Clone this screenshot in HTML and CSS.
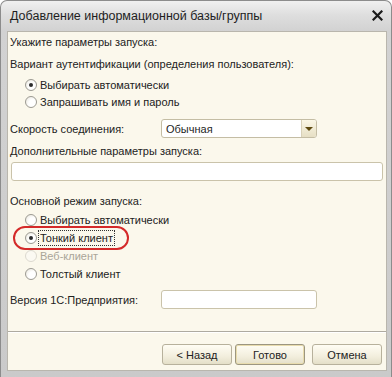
FILE: index.html
```html
<!DOCTYPE html>
<html lang="ru">
<head>
<meta charset="utf-8">
<title>Добавление информационной базы/группы</title>
<link rel="stylesheet" href="styles.css">
</head>
<body>
<div class="window">
  <div class="titlebar">
    <span class="title">Добавление информационной базы/группы</span>
    <svg class="close" width="11" height="11" viewBox="0 0 11 11"><path d="M1.5 1.5 L9.5 9.5 M9.5 1.5 L1.5 9.5" stroke="#1a1a1a" stroke-width="2.2" stroke-linecap="square"/></svg>
  </div>
  <div class="content">
    <div class="form">
      <div class="label l1">Укажите параметры запуска:</div>
      <div class="label l2">Вариант аутентификации (определения пользователя):</div>
      <div class="radios r1">
        <div class="radio checked"><span class="dot"></span><span>Выбирать автоматически</span></div>
        <div class="radio"><span class="dot"></span><span>Запрашивать имя и пароль</span></div>
      </div>
      <div class="row speed">
        <span class="label">Скорость соединения:</span>
        <div class="select"><span class="value">Обычная</span><span class="drop"><span class="tri"></span></span></div>
      </div>
      <div class="label l3">Дополнительные параметры запуска:</div>
      <div class="input wide"></div>
      <div class="label l4">Основной режим запуска:</div>
      <div class="radios r2">
        <div class="radio"><span class="dot"></span><span>Выбирать автоматически</span></div>
        <div class="radio checked marked"><span class="dot"></span><span class="focus">Тонкий клиент</span><span class="ring"></span></div>
        <div class="radio disabled"><span class="dot"></span><span>Веб-клиент</span></div>
        <div class="radio"><span class="dot"></span><span>Толстый клиент</span></div>
      </div>
      <div class="row version">
        <span class="label">Версия 1С:Предприятия:</span>
        <div class="input short"></div>
      </div>
    </div>
    <div class="separator"></div>
    <div class="buttons">
      <button class="btn">&lt; Назад</button>
      <button class="btn default">Готово</button>
      <button class="btn">Отмена</button>
    </div>
  </div>
</div>
</body>
</html>
```

FILE: styles.css
```css
* { box-sizing: border-box; }
html, body { margin: 0; padding: 0; background: #ffffff; }
body {
  font-family: "Liberation Sans", Arial, sans-serif;
  font-size: 11px;
  color: #222222;
}
.window {
  width: 392px;
  height: 377px;
  border: 1px solid #8c8c8c;
  border-bottom: none;
  border-radius: 7px 7px 0 0;
  background: linear-gradient(#f0f0f0 0px, #dedede 14px, #d2d2d2 30px, #cacaca 100%);
  display: flex;
  flex-direction: column;
  overflow: hidden;
}
.titlebar {
  height: 30px;
  flex: none;
  display: flex;
  align-items: center;
  justify-content: space-between;
  padding: 0 8px 1px 9px;
}
.title {
  font-size: 12.5px;
  color: #1e1e1e;
}
.close { display: block; }
.content {
  flex: 1;
  margin: 0 4px 6px 6px;
  background: #fbf8ec;
  border: 1px solid #b9b6ad;
  display: flex;
  flex-direction: column;
}
.form {
  padding: 3px 0 0 2px;
  display: flex;
  flex-direction: column;
  align-items: flex-start;
}
.label { line-height: 14px; white-space: nowrap; }
.l2 { margin-top: 8px; }
.r1 { margin-top: 7px; }
.radios { display: flex; flex-direction: column; gap: 3px; }
.r2 { margin-top: 5px; gap: 4px; }
.radio {
  position: relative;
  display: flex;
  align-items: center;
  height: 14px;
  padding-left: 15px;
  gap: 3px;
  white-space: nowrap;
}
.dot {
  width: 12px;
  height: 12px;
  border-radius: 50%;
  border: 1px solid #9c9a92;
  background: radial-gradient(circle at 65% 65%, #ffffff 40%, #e6e3d8 100%);
  display: flex;
  align-items: center;
  justify-content: center;
  flex: none;
}
.checked .dot::after {
  content: "";
  width: 4px;
  height: 4px;
  border-radius: 50%;
  background: #2c2c2c;
}
.disabled { color: #aaa598; }
.disabled .dot { border-color: #dcd9cf; background: #fbf9f2; }
.focus {
  outline: 1px dotted #333333;
  outline-offset: 0;
  padding: 1px 1px;
  margin-left: -1px;
}
.ring {
  position: absolute;
  left: 3px;
  top: -5px;
  width: 116px;
  height: 24px;
  border: 2px solid #d42a2a;
  border-radius: 12px;
  pointer-events: none;
}
.row {
  display: grid;
  grid-template-columns: 151px auto;
  align-items: center;
  width: 100%;
}
.speed { margin-top: 10px; }
.select {
  width: 156px;
  height: 19px;
  border: 1px solid #c4bda4;
  border-radius: 3px;
  background: #ffffff;
  display: flex;
  align-items: center;
  justify-content: space-between;
  overflow: hidden;
}
.value { padding-left: 4px; color: #1e1e1e; }
.drop {
  width: 15px;
  height: 100%;
  border-left: 1px solid #d8d1b8;
  background: linear-gradient(#fbf7e6, #e6dfc4);
  display: flex;
  align-items: center;
  justify-content: center;
}
.tri {
  width: 0;
  height: 0;
  border-left: 4px solid transparent;
  border-right: 4px solid transparent;
  border-top: 4px solid #5e4a10;
  margin-top: 1px;
}
.l3 { margin-top: 6px; }
.input {
  height: 19px;
  background: #ffffff;
  border: 1px solid #cac3aa;
  border-radius: 3px;
}
.wide { width: 372px; margin-top: 4px; margin-left: 1px; }
.l4 { margin-top: 13px; }
.version { margin-top: 9px; }
.short { width: 156px; }
.separator {
  margin-top: 22px;
  height: 2px;
  border-top: 1px solid #aeaaa0;
  border-bottom: 1px solid #ffffff;
}
.buttons {
  display: flex;
  justify-content: flex-end;
  padding: 11px 4px 0 0;
  gap: 4px;
}
.btn {
  font-family: "Liberation Sans", Arial, sans-serif;
  font-size: 11px;
  color: #222222;
  width: 70px;
  height: 21px;
  padding: 0;
  border: 1px solid #b7b19c;
  border-radius: 3px;
  background: linear-gradient(#fffdf4, #f2eedd 60%, #e4dfc8);
}
.btn + .btn { margin-left: 3px; }
.btn:first-child + .btn { margin-left: -1px; }
.default {
  border-color: #9c9680;
  box-shadow: inset 0 0 0 1px #e8dcae;
}
```
